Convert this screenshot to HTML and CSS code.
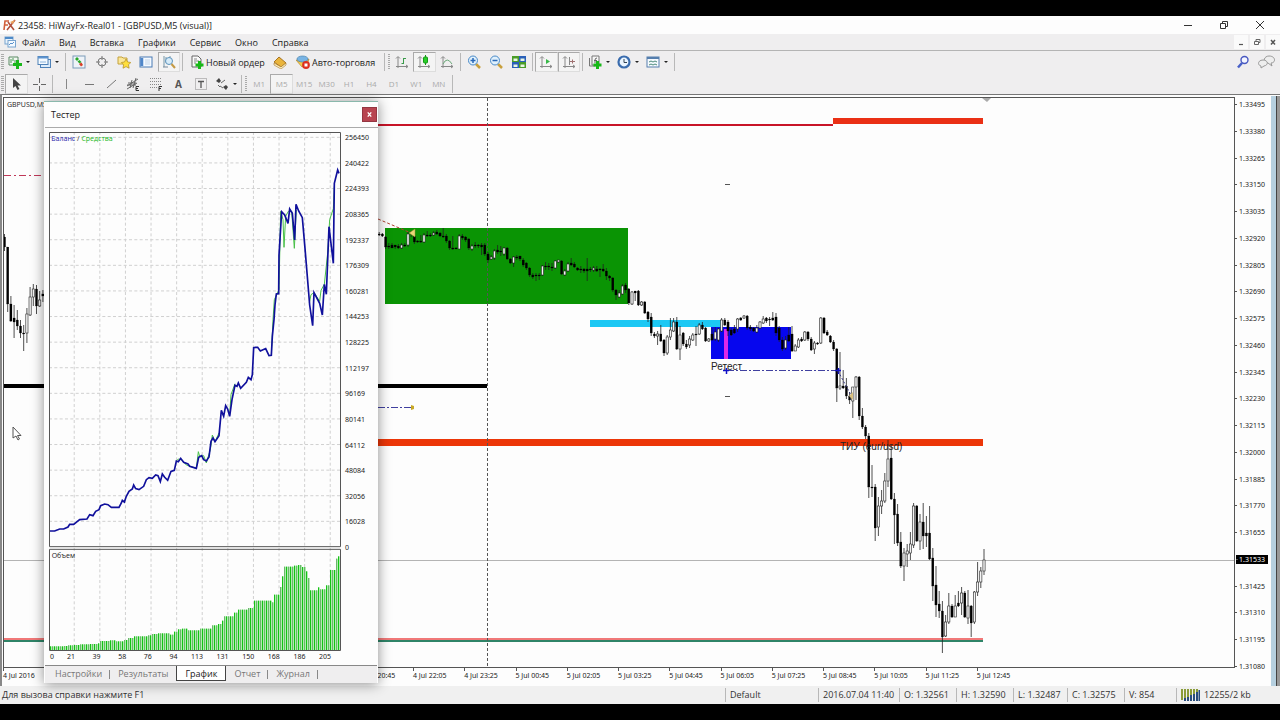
FILE: index.html
```html
<!DOCTYPE html>
<html lang="ru">
<head>
<meta charset="utf-8">
<title>23458: HiWayFx-Real01 - [GBPUSD,M5 (visual)]</title>
<link rel="stylesheet" href="styles.css">
</head>
<body>
<div class="app">
  <header class="titlebar">
    <svg class="logo" width="14" height="12" viewBox="0 0 14 12"><path d="M2 11L3 2h4M2.500 6H6" fill="none" stroke="#d2603c" stroke-width="1.600"/><path d="M6 3l6 8M13 1L5 11" fill="none" stroke="#b2503c" stroke-width="1.600"/><path d="M8 3l5-2-2 4" fill="#e9a05c"/></svg>
    <h1 class="title">23458: HiWayFx-Real01 - [GBPUSD,M5 (visual)]</h1>
    <div class="winbtns">
      <button aria-label="Свернуть"><svg width="10" height="10" viewBox="0 0 10 10"><path d="M1 5.500h8" stroke="#333" fill="none"/></svg></button>
      <button aria-label="Восстановить"><svg width="10" height="10" viewBox="0 0 10 10"><path d="M1.500 3.500h5v5h-5zM3.500 3V1.500h5v5H7" stroke="#333" fill="none"/></svg></button>
      <button aria-label="Закрыть"><svg width="10" height="10" viewBox="0 0 10 10"><path d="M1 1l8 8M9 1L1 9" stroke="#333" fill="none"/></svg></button>
    </div>
  </header>

  <nav class="menubar">
    <svg class="menuicon" width="12" height="12" viewBox="0 0 12 12"><rect x="1" y="1" width="8" height="7" fill="#e8f2fb" stroke="#78a4cf"/><path d="M1 2h8" stroke="#4e8ac8" stroke-width="2"/><rect x="4" y="4.500" width="7.500" height="6.500" fill="#f4faff" stroke="#78a4cf"/><path d="M5 9l2-2 1 1 2-2" fill="none" stroke="#5b92cc"/></svg>
    <button>Файл</button><button>Вид</button><button>Вставка</button><button>Графики</button><button>Сервис</button><button>Окно</button><button>Справка</button>
    <div class="mdibtns">
      <button aria-label="Свернуть график"><svg width="8" height="8" viewBox="0 0 8 8"><path d="M2 6.500h4" stroke="#555" stroke-width="1.200"/></svg></button>
      <button aria-label="Восстановить график"><svg width="8" height="8" viewBox="0 0 8 8"><path d="M1.500 3.500h4v3h-4zM3 3V1.500h4v3H6M3 1.500h4" stroke="#666" fill="none"/></svg></button>
      <button aria-label="Закрыть график"><svg width="8" height="8" viewBox="0 0 8 8"><path d="M2 2l4 4.500M6 2L2 6.500" stroke="#555" stroke-width="1.500"/></svg></button>
    </div>
  </nav>

  <div class="toolbar">
    <span class="grip"></span>
    <button class="split" aria-label="Новый график"><svg class="ic" viewBox="0 0 14 14"><path d="M1 2h9v8H1z" fill="#f1f7f1" stroke="#5a8a64"/><path d="M3 4v4M5 3v3M7 5v3" stroke="#4a9a54"/><path d="M9.500 5v9M5 9.500h9" stroke="#1ab81a" stroke-width="3"/></svg></button>
    <button class="split" aria-label="Профили"><svg class="ic" viewBox="0 0 14 14"><rect x="3.500" y="4.500" width="10" height="8" fill="#dcecfb" stroke="#4f82b8"/><rect x="1" y="1.500" width="10" height="8" fill="#f4faff" stroke="#4f82b8"/><path d="M1 2.500h10" stroke="#5d93ce" stroke-width="2"/><path d="M3 7h6" stroke="#8db4dc"/></svg></button>
    <span class="sep"></span>
    <div class="group g5">
      <button aria-label="Обзор рынка"><svg class="ic" viewBox="0 0 14 14"><rect x="1" y="1" width="12" height="12" fill="#eef3f8" stroke="#7c9cba"/><path d="M3 4l2-2 2 2-2 2zM5.500 6.500l2-1.500 2 2-2 1.500z" fill="#28a828"/><path d="M7 9l2.500-1.500L11 10l-2 1.500z" fill="#d84028"/></svg></button>
      <button aria-label="Окно данных"><svg class="ic" viewBox="0 0 14 14"><circle cx="7" cy="7" r="4" fill="none" stroke="#777"/><path d="M7 1v4M7 9v4M1 7h4M9 7h4" stroke="#777"/></svg></button>
      <button aria-label="Навигатор"><svg class="ic" viewBox="0 0 14 14"><path d="M1 2h4l1 1h4v6H1z" fill="#fbe79a" stroke="#c4a23c"/><path d="M9 4l1.600 3 3.200.5-2.300 2.300.6 3.400L9 11.600l-3 1.600.6-3.400L4.300 7.500 7.500 7z" fill="#ffdf3c" stroke="#b8942c" stroke-width=".8"/></svg></button>
      <button aria-label="Терминал"><svg class="ic" viewBox="0 0 14 14"><rect x="1" y="2" width="12" height="10" fill="#f4f9ff" stroke="#4a7ab4"/><path d="M2 3v8M3.500 3v8" stroke="#4f86c8" stroke-width="1.500"/><path d="M6 5h5M6 7h5M6 9h5" stroke="#c2d4e8"/></svg></button>
      <button class="on" aria-label="Тестер"><svg class="ic" viewBox="0 0 14 14"><path d="M2 1v11M4 2v6M8 1v4" stroke="#7898a8"/><path d="M1 12h5" stroke="#789"/><circle cx="7" cy="6" r="3.500" fill="#d6ebf8" stroke="#5c93bc"/><path d="M9.500 9l3.500 4" stroke="#c49a44" stroke-width="2"/></svg></button>
    </div>
    <span class="sep"></span>
    <button class="text order"><svg class="ic" viewBox="0 0 14 14"><path d="M2 1h6l3 3v8H2z" fill="#fafafa" stroke="#666"/><path d="M4 4h3M4 6h5M4 8h2" stroke="#888"/><path d="M9.500 6v8M5.500 10h8" stroke="#18b818" stroke-width="3"/></svg>Новый ордер</button>
    <button class="book" aria-label="MetaEditor"><svg class="ic" viewBox="0 0 14 14"><path d="M1 7l5-5 7 6-5 4z" fill="#e9b43c" stroke="#a67422"/><path d="M1 8l7 4 5-4v2l-5 4-7-4z" fill="#fff3c4" stroke="#a67422" stroke-width=".6"/></svg></button>
    <button class="text auto"><svg class="ic" viewBox="0 0 14 14"><path d="M0 5q7 3 13-1l-2 6-5 2z" fill="#f4c84c" stroke="#b48a28" stroke-width=".7"/><ellipse cx="6.500" cy="4" rx="5.500" ry="3" fill="#78b4e4" stroke="#4a82ac" stroke-width=".7"/><circle cx="10" cy="10" r="3.900" fill="#dc3020"/><rect x="8.500" y="8.500" width="3" height="3" fill="#fff"/></svg>Авто-торговля</button>
    <span class="sep"></span><span class="grip thin"></span>
    <div class="group g3">
      <button aria-label="Бары"><svg class="ic" viewBox="0 0 14 14"><path d="M3 2v11M1 11.500h12M1 3.500l2-2 2 2M11 10l2 1.500-2 1.500" fill="none" stroke="#888"/><path d="M8.500 3v6M8.500 3.500H11M6.500 8.500h2" stroke="#3a9a4a" fill="none"/></svg></button>
      <button class="on" aria-label="Свечи"><svg class="ic" viewBox="0 0 14 14"><path d="M3 2v11M1 11.500h12M1 3.500l2-2 2 2M11 10l2 1.500-2 1.500" fill="none" stroke="#888"/><path d="M8.500 0v10" stroke="#189818"/><rect x="6.500" y="2" width="4" height="6" rx="1" fill="#28d028" stroke="#189818"/></svg></button>
      <button aria-label="Линия"><svg class="ic" viewBox="0 0 14 14"><path d="M3 2v11M1 11.500h12M1 3.500l2-2 2 2M11 10l2 1.500-2 1.500" fill="none" stroke="#888"/><path d="M3 9q4-8 9 0" fill="none" stroke="#6aa878"/></svg></button>
    </div>
    <span class="sep"></span>
    <div class="group g3">
      <button aria-label="Увеличить"><svg class="ic" viewBox="0 0 14 14"><path d="M9 9l4 4" stroke="#c8a03c" stroke-width="2.500"/><circle cx="6" cy="5.500" r="4.500" fill="#dff0fc" stroke="#4a8ac8"/><path d="M6 3v5M3.500 5.500h5" stroke="#2868b8" stroke-width="1.500"/></svg></button>
      <button aria-label="Уменьшить"><svg class="ic" viewBox="0 0 14 14"><path d="M9 9l4 4" stroke="#c8a03c" stroke-width="2.500"/><circle cx="6" cy="5.500" r="4.500" fill="#dff0fc" stroke="#4a8ac8"/><path d="M3.500 5.500h5" stroke="#2868b8" stroke-width="1.500"/></svg></button>
      <button aria-label="Окна мозаикой"><svg class="ic" viewBox="0 0 14 14"><path d="M0 1h7v6H0zM7 7h7v6H7z" fill="#4a9c28"/><path d="M7 1h7v6H7zM0 7h7v6H0z" fill="#2a60b8"/><path d="M1.500 3.500h4V6h-4zM8.500 3.500h4V6h-4zM1.500 9.500h4V12h-4zM8.500 9.500h4V12h-4z" fill="#eaf6e4"/></svg></button>
    </div>
    <span class="sep"></span>
    <div class="group g2">
      <button class="on" aria-label="Автопрокрутка"><svg class="ic" viewBox="0 0 14 14"><path d="M3 2v11M1 11.500h12M1 3.500l2-2 2 2M11 10l2 1.500-2 1.500" fill="none" stroke="#888"/><path d="M7 4l4 2.500L7 9z" fill="#38b848"/></svg></button>
      <button class="on" aria-label="Сдвиг графика"><svg class="ic" viewBox="0 0 14 14"><path d="M3 2v11M1 11.500h12M1 3.500l2-2 2 2M11 10l2 1.500-2 1.500M7.500 2v8" fill="none" stroke="#888"/><path d="M8 6.500h5M10.500 4.500v4" stroke="#a07070"/></svg></button>
    </div>
    <span class="sep"></span>
    <button class="split" aria-label="Индикаторы"><svg class="ic" viewBox="0 0 14 14"><path d="M4 1h7v9H4z" fill="#f6f6f6" stroke="#777"/><path d="M1.500 3v8h6" fill="none" stroke="#777"/><path d="M9 3q-2 0-2 2v3M6 5.500h3" fill="none" stroke="#666"/><path d="M9.500 6v8M5.500 10h8" stroke="#18b818" stroke-width="3"/></svg></button>
    <button class="split" aria-label="Периоды"><svg class="ic" viewBox="0 0 14 14"><circle cx="7" cy="7" r="5.500" fill="#eaf5ff" stroke="#3a6cae" stroke-width="2.200"/><path d="M7 4v3.500h3" fill="none" stroke="#345"/></svg></button>
    <button class="split" aria-label="Шаблоны"><svg class="ic" viewBox="0 0 14 14"><rect x="1" y="2" width="12" height="10" fill="#f6faff" stroke="#567fae"/><path d="M1 3h12" stroke="#567fae" stroke-width="2"/><path d="M3 7l2-1 2 1 2-1 2 1M3 10l2-1 2 1 2-1 2 1" fill="none" stroke="#4a8a7a"/></svg></button>
    <span class="sep"></span>
    <div class="right">
      <button aria-label="Поиск"><svg class="ic" viewBox="0 0 14 14"><circle cx="8.500" cy="5" r="3.500" fill="#f4f6ff" stroke="#4858c0" stroke-width="1.400"/><path d="M6 8l-4 4.500" stroke="#4860c8" stroke-width="2.500"/></svg></button>
      <button aria-label="Сообщения"><svg width="17" height="14" viewBox="0 0 17 14"><path d="M11 1c7 0 7 7 2 7l1 3-4-3C4 7 6 1 11 1z" fill="#eee" stroke="#999"/><path d="M5 5c5 0 6 5 1 6l-3 2 0-2C-1 10 0 5 5 5z" fill="#eee" stroke="#999"/></svg></button>
    </div>
  </div>

  <div class="toolbar second">
    <span class="grip"></span>
    <div class="group g2">
      <button class="on" aria-label="Курсор"><svg class="ic" viewBox="0 0 14 14"><path d="M4 1v10l2.500-2 2 4 2-1-2-3.500H12z" fill="#444"/></svg></button>
      <button aria-label="Перекрестие"><svg class="ic" viewBox="0 0 14 14"><path d="M7.500 1v5M7.500 9v5M1 7.500h5M9 7.500h5" stroke="#666"/></svg></button>
    </div>
    <span class="sep"></span>
    <div class="group g7">
      <button aria-label="Вертикальная линия"><svg class="ic" viewBox="0 0 14 14"><path d="M7.500 2v10" stroke="#888"/></svg></button>
      <button aria-label="Горизонтальная линия"><svg class="ic" viewBox="0 0 14 14"><path d="M3 7.500h9" stroke="#777"/></svg></button>
      <button aria-label="Трендовая линия"><svg class="ic" viewBox="0 0 14 14"><path d="M3 11L12 3" stroke="#777"/></svg></button>
      <button aria-label="Канал"><svg class="ic" viewBox="0 0 14 14"><path d="M1 9l11-7M1 12l10-6M4 11l2-8M7 11l3-10M2 6h8M1 8h9" stroke="#666" fill="none"/><path d="M13 9.500h-3v4h3M10 11.500h2" stroke="#333" fill="none"/></svg></button>
      <button aria-label="Фибоначчи"><svg class="ic" viewBox="0 0 14 14"><path d="M1 1.500h12M1 4.500h12M1 7.500h12M1 10.500h7" stroke="#888" stroke-dasharray="1 1"/><path d="M13 9.500h-3V14M10 11.500h2" stroke="#333" fill="none"/></svg></button>
      <button class="glyph">A</button>
      <button aria-label="Метка"><svg class="ic" viewBox="0 0 14 14"><rect x="1.500" y="1.500" width="11" height="11" fill="none" stroke="#888" stroke-dasharray="1 1"/><path d="M4 4.500h6M7 4v7" stroke="#555" stroke-width="1.300"/></svg></button>
    </div>
    <button class="split" aria-label="Стрелки"><svg class="ic" viewBox="0 0 14 14"><path d="M1 4l3-3 2 3-2 2zM8 10l3-2 2 2-2 3z" fill="#444"/><path d="M3 8l2 2M6 6l4-3M5 9l3 2" fill="none" stroke="#666"/></svg></button>
    <span class="sep"></span><span class="grip thin"></span>
    <div class="group g9">
      <button>M1</button><button class="on">M5</button><button>M15</button><button>M30</button><button>H1</button><button>H4</button><button>D1</button><button>W1</button><button>MN</button>
    </div>
    <span class="sep"></span>
  </div>

  <main class="workspace">
    <div class="chart">
      <div class="plotbox">
        <svg class="plot" viewBox="4 98 1230 569" preserveAspectRatio="none">
          <path d="M4 560.500H1235" stroke="#b4b4b4"/>
          <path d="M4 175.500H44" stroke="#c03858" stroke-dasharray="7 3 2 3"/>
          <rect x="378" y="124" width="455" height="2" fill="#c81428"/>
          <rect x="833" y="118" width="150" height="6" fill="#ea3015"/>
          <rect x="378" y="439" width="605" height="7" fill="#ec3608"/>
          <rect x="4" y="384" width="483" height="4" fill="#000"/>
          <rect x="4" y="638" width="979" height="2" fill="#f07878"/>
          <rect x="4" y="640" width="979" height="2" fill="#2f8468"/>
          <rect x="385" y="228" width="243" height="76" fill="#0a9404"/>
          <rect x="590" y="320" width="131" height="7" fill="#1cc8f4"/>
          <rect x="711" y="327" width="80" height="32" fill="#0606ee"/>
          <rect x="724" y="329" width="4" height="30" fill="#dc28e8"/>
          <path d="M487.500 98V668" stroke="#555" stroke-dasharray="3 2"/>
          <path d="M378 219l33 14" stroke="#b04030" stroke-dasharray="3 2" fill="none"/>
          <path d="M378 407.500H412M727 370.500H836" stroke="#4040a0" stroke-dasharray="7 2 2 2" fill="none"/>
          <path d="M411 405l3 1v3l-3 1z" fill="#c8a828"/>
          <path d="M725 184.500h5M725 396.500h5" stroke="#555"/>
          <path d="M982 98h9l-4 4z" fill="#aaa"/>
          <g id="candles"></g>
          <path d="M415 229v8l-6-4z" fill="#e8d878" stroke="#a09030" stroke-width=".5"/>
          <path d="M723 370.500h6M726.500 368v6M835 370.500h6M838.500 368v6" stroke="#1010c8" stroke-width="1.500"/>
          <path d="M838 371l14 26" stroke="#303080" stroke-dasharray="2 2" fill="none"/>
          <path d="M853 392v8l-4-4z" fill="#d8c080"/>
          <text x="711" y="370" class="mark">Ретест</text>
          <text x="840" y="450" class="mark">ТИУ (eur/usd)</text>
          <text x="7" y="107" class="symbol">GBPUSD,M5</text>
        </svg>
      </div>
      <div class="prices">
        <span>1.33495</span><span>1.33380</span><span>1.33265</span><span>1.33150</span><span>1.33035</span><span>1.32920</span><span>1.32805</span><span>1.32690</span><span>1.32575</span><span>1.32460</span><span>1.32345</span><span>1.32230</span><span>1.32115</span><span>1.32000</span><span>1.31885</span><span>1.31770</span><span>1.31655</span><span class="now">1.31533</span><span>1.31425</span><span>1.31310</span><span>1.31195</span><span>1.31080</span>
      </div>
      <div class="times">
        <span>4 Jul 2016</span><span class="resume">4 Jul 20:45</span><span>4 Jul 22:05</span><span>4 Jul 23:25</span><span>5 Jul 00:45</span><span>5 Jul 02:05</span><span>5 Jul 03:25</span><span>5 Jul 04:45</span><span>5 Jul 06:05</span><span>5 Jul 07:25</span><span>5 Jul 08:45</span><span>5 Jul 10:05</span><span>5 Jul 11:25</span><span>5 Jul 12:45</span>
      </div>
    </div>
    <div class="edge"></div>

    <section class="tester">
      <div class="testerhead"><h2>Тестер</h2><button class="close" aria-label="Закрыть тестер"><svg width="7" height="7" viewBox="0 0 8 8"><path d="M2 1.500l4 5M6 1.500l-4 5" stroke="#fff" stroke-width="1.500"/></svg></button></div>
      <div class="testerbody">
        <svg class="graph" viewBox="148 -563 876 1557" preserveAspectRatio="none">
          <g id="grid" stroke="#d0d0d0" stroke-width="3" stroke-dasharray="9 7"></g>
          <g id="volume"></g>
          <polyline fill="none" stroke="#48c048" stroke-width="3" points="530,424 536,418 545,420 560,436 590,446 596,396 600,410 612,408 620,430 632,390 638,346 646,366 658,340"/>
          <polyline fill="none" stroke="#48c048" stroke-width="3" points="690,285 694,225 706,192"/>
          <polyline fill="none" stroke="#48c048" stroke-width="3" points="815,107 820,0 824,-60 838,-90 843,-325 850,-300 853,-217 858,-310 866,-325 876,-325 884,-214 890,-330"/>
          <polyline fill="none" stroke="#48c048" stroke-width="3" points="929,-50 934,-75 943,-81 960,-55 964,-88 974,-106 984,-200 990,-300 1001,-333 1004,-400"/>
          <polyline fill="none" stroke="#10109c" stroke-width="5" points="148,634 165,634 180,628 192,628 205,622 210,614 222,614 240,600 262,598 270,585 280,588 288,575 298,570 303,558 315,553 325,555 335,563 358,563 365,550 368,542 374,547 380,530 388,515 398,508 402,496 408,507 418,510 432,500 440,480 448,474 458,476 468,466 475,468 482,486 488,463 495,473 504,482 514,455 524,452 530,424 536,426 543,416 552,428 565,433 570,440 590,446 597,413 606,408 612,420 620,424 628,412 634,365 640,355 646,366 658,348 665,272 672,290 678,258 684,268 690,290 697,240 706,197 712,200 716,190 723,206 740,188 746,173 754,180 758,165 762,84 768,83 774,83 782,94 790,90 798,87 808,108 815,107 818,50 823,0 826,-44 830,-77 837,-78 838,-194 846,-324 855,-314 865,-289 870,-332 878,-319 885,-239 889,-346 897,-326 908,-306 916,-214 930,-44 939,18 943,-81 960,-49 968,-14 974,-106 980,-76 988,-279 1001,-169 1004,-409 1014,-449 1018,-439"/>
          <path d="M149.500 -561.500H1022.500V681H149.500zM149.500 689H1022.500V992.500H149.500z" fill="none" stroke="#555" stroke-width="3"/>
          <text x="155" y="-536" class="legend"><tspan fill="#2222a8">Баланс</tspan> / <tspan fill="#22b822">Средства</tspan></text>
          <text x="156" y="715" class="legend">Объем</text>
        </svg>
        <div class="values">
          <span>256450</span><span>240422</span><span>224393</span><span>208365</span><span>192337</span><span>176309</span><span>160281</span><span>144253</span><span>128225</span><span>112197</span><span>96169</span><span>80141</span><span>64112</span><span>48084</span><span>32056</span><span>16028</span><span>0</span>
        </div>
        <div class="trades">
          <span class="first"><b>0</b><b>21</b></span><span>39</span><span>58</span><span>76</span><span>94</span><span>113</span><span>131</span><span>150</span><span>168</span><span>186</span><span>205</span>
        </div>
      </div>
      <div class="tabs" role="tablist">
        <button role="tab">Настройки</button><button role="tab">Результаты</button><button role="tab" class="active">График</button><button role="tab">Отчет</button><button role="tab">Журнал</button>
      </div>
    </section>
    <svg class="cursor" width="10" height="16" viewBox="0 0 10 16"><path d="M1 1v11l3-2 2 4 1.500-1-2-3.500H9z" fill="#fff" stroke="#555"/></svg>
  </main>

  <footer class="status">
    <span class="help">Для вызова справки нажмите F1</span>
    <span class="profile">Default</span><span class="date">2016.07.04 11:40</span><span class="price">O: 1.32561</span><span class="price">H: 1.32590</span><span class="quote">L: 1.32487</span><span class="price">C: 1.32575</span><span class="vol">V: 854</span>
    <span class="net"><svg width="19" height="12" viewBox="0 0 19 12"><path d="M1 0v11M4 0v11M7 0v9M10 0v7M13 0v5M16 0v4" stroke="#8a9c38" stroke-width="2"/><path d="M4 9v3M7 8v4M10 6v6M13 5v7M16 3v9M18.500 1v11" stroke="#284c7c" stroke-width="2"/></svg>12255/2 kb</span>
  </footer>
</div>
<script src="chart.js"></script>
</body>
</html>
```

FILE: styles.css
```css
* { box-sizing: border-box; }
body { margin: 0; background: #000; color: #222; font-family: "Open Sans", "Noto Sans", sans-serif; font-size: 9px; }
button { margin: 0; padding: 0; border: 0; background: none; color: inherit; font: inherit; display: flex; align-items: center; justify-content: center; }
svg { display: block; flex: none; }
.app { height: 100vh; padding: 16px 0; display: flex; flex-direction: column; }
.titlebar { height: 18px; background: #fdfdfd; display: flex; align-items: center; padding: 0 2px; gap: 2px; flex: none; }
.title { margin: 0; font-size: 9px; font-weight: 400; }
.winbtns { margin-left: auto; display: flex; }
.winbtns button { width: 36px; height: 16px; }
.menubar { height: 17px; background: #efeeef; border-bottom: 1px solid #b4b4b4; display: flex; align-items: center; padding-left: 4px; flex: none; }
.menuicon { margin-right: 6px; }
.menubar > button { margin-right: 14px; }
.mdibtns { margin-left: auto; display: flex; gap: 2px; }
.mdibtns button { width: 14px; height: 14px; background: #fafafa; }

.toolbar { height: 22px; background: #efeeef; display: flex; align-items: center; flex: none; }
.second { height: 21px; font-size: 8px; color: #aaa; }
.toolbar button { height: 20px; }
.grip { width: 3px; height: 16px; margin: 0 1px; background: repeating-linear-gradient(#aaa 0 1px, #efeeef 1px 2px); }
.thin { width: 2px; }
.sep { width: 1px; height: 18px; margin: 0 2px; background: #b8b8b8; }
.ic { width: 14px; height: 14px; }
.group { display: grid; grid-auto-flow: column; grid-auto-columns: 1fr; }
.g2 { width: 45px; }
.g3 { width: 67px; }
.g5 { width: 112px; }
.g7 { width: 157px; }
.g9 { width: 202px; }
.on { background: #f4f4f4; border: 1px solid; border-color: #aaa #ddd #ddd #aaa; }
.split { width: 29px; justify-content: flex-start; padding-left: 3px; gap: 4px; }
.split::after { content: ""; border: 2px solid transparent; border-top-color: #222; border-bottom: 0; }
.second .split { width: 27px; }
.text { gap: 2px; justify-content: flex-start; padding-left: 5px; white-space: nowrap; }
.order { width: 83px; }
.book { width: 24px; }
.auto { width: 90px; padding-left: 4px; }
.glyph { font-size: 10px; font-weight: 700; color: #555; }
.right { margin-left: auto; display: flex; padding-right: 5px; gap: 8px; }

.workspace { position: relative; flex: 1; min-height: 0; display: flex; background: #fdfdfd; border-top: 1px solid #777; border-left: 2px solid #888; padding-top: 2px; }
.chart { flex: 1; display: grid; grid-template-columns: 1fr 36px; grid-template-rows: 1fr 18px; min-width: 0; padding-left: 1px; }
.plotbox { border: 1px solid #555; min-height: 0; min-width: 0; }
.plot { width: 100%; height: 100%; }
.mark { font-family: "Liberation Sans", Arial, sans-serif; font-size: 10px; fill: #222; }
.symbol { font-size: 7px; fill: #222; }
.prices, .times, .values, .trades { font-size: 7px; line-height: 9px; font-family: "Noto Sans", "Open Sans", sans-serif; color: #222; }
.prices { display: flex; flex-direction: column; justify-content: space-between; padding-top: 3px; margin-bottom: -3px; }
.prices span { position: relative; padding-left: 4px; }
.prices span::before { content: ""; position: absolute; left: 0; top: 4px; width: 2px; height: 1px; background: #555; }
.prices .now { background: #000; color: #fff; margin: 0 3px 0 1px; padding-left: 3px; }
.times { display: grid; grid-template-columns: repeat(24, 1fr); padding-right: 2px; padding-top: 3px; white-space: nowrap; }
.times span { position: relative; }
.times .resume { grid-column-start: 8; }
.times span::before { content: ""; position: absolute; left: 0; top: -3px; width: 1px; height: 3px; background: #555; }
.edge { width: 9px; background: #b6d0e0; border-right: 3px solid #999; box-shadow: inset -1px 0 #444; margin-top: -1px; }

.tester { position: absolute; left: 42px; top: 6px; width: 334px; height: 582px; display: flex; flex-direction: column; background: #fdfdfd; border-top: 1px solid #8ab8ac; box-shadow: 0 1px 12px rgba(0, 0, 0, .45); }
.testerhead { height: 26px; display: flex; align-items: center; justify-content: space-between; padding: 0 1px 0 6px; border-bottom: 1px solid #aaa; margin-left: 1px; }
.testerhead h2 { margin: 0; font-size: 9px; font-weight: 400; }
.close { width: 15px; height: 15px; background: #b84450; border: 1px solid #943642; }
.testerbody { flex: 1; min-height: 0; display: grid; grid-template-columns: 292px 1fr; grid-template-rows: 1fr 14px; padding: 4px 0 0 5px; }
.graph { width: 100%; height: 100%; min-height: 0; }
.legend { font-size: 21px; fill: #222; }
.values { display: flex; flex-direction: column; justify-content: space-between; padding: 1px 0 99px 4px; }
.trades { display: grid; grid-template-columns: 26px repeat(10, 1fr); padding: 1px 10px 0 0; text-align: right; }
.trades b { font-weight: 400; }
.first { display: flex; justify-content: space-between; padding-left: 1px; }
.tabs { height: 18px; flex: none; display: flex; margin: 0 1px; padding-left: 2px; background: #efeeef; border-top: 1px solid #888; color: #777; }
.tabs button { height: 15px; padding: 0 8px; position: relative; }
.tabs button:not(.active)::after { content: ""; position: absolute; right: 0; top: 4px; height: 9px; width: 1px; background: #888; }
.tabs button:nth-child(2)::after { display: none; }
.tabs .active { background: #fff; color: #222; border: 1px solid #444; border-top: 0; padding: 0 8px; }
.cursor { position: absolute; left: 10px; top: 331px; }

.status { height: 18px; flex: none; display: flex; align-items: center; background: #f0f0f0; color: #333; font-size: 9px; white-space: nowrap; }
.status span { border-left: 1px solid #b8b8b8; padding-left: 4px; height: 14px; line-height: 14px; }
.status .help { flex: 1; border: 0; padding-left: 2px; }
.profile { width: 93px; }
.date { width: 81px; }
.price { width: 57px; }
.quote { width: 54px; }
.vol { width: 52px; }
.status .net { width: 104px; display: flex; align-items: center; gap: 4px; }
```

FILE: chart.js
```js
const NS = "http://www.w3.org/2000/svg";

function add(parent, tag, attrs) {
  const node = document.createElementNS(NS, tag);
  for (const key in attrs) node.setAttribute(key, attrs[key]);
  parent.appendChild(node);
}

// Each candle: high, body top, body bottom, low; a trailing "w" marks a rising one.
const early = "234 237 247 251,247 247 304 312,296 304 321 322,305 318 322 338,310 320 326 330,320 326 333 338,325 333 334 351,308 314 333 343 w,287 297 315 316 w,284 289 297 306 w,285 289 306 314,291 300 306 307 w,290 294 296 302";
const main = [
  "232 234 235 236,233 234 236 237,236 237 247 249,243 246 247 249,243 245 248 248,245 245 247 249,244 246 248 249,243 245 248 249 w,243 245 246 247,232 234 245 247 w",
  "231 232 234 237,235 236 242 244,240 241 242 243,235 241 242 243,233 235 242 243 w,231 235 236 237,233 235 236 237,231 233 235 236 w,230 232 234 235,232 233 236 237",
  "228 236 237 238,234 236 241 243,240 241 248 250,236 248 249 250,247 248 249 249,234 236 249 249 w,234 236 238 240,236 237 240 242,238 239 248 250,244 246 249 251 w",
  "242 245 246 248,244 245 246 248,243 245 247 255,243 245 254 256,252 254 260 263,255 257 259 260 w,249 251 258 260 w,245 250 252 254,246 251 252 256,247 248 254 256 w",
  "247 248 259 260,258 259 263 264,256 257 263 267 w,255 257 258 260,256 256 259 261,258 260 265 267,262 263 268 270,267 268 275 277,273 275 277 279,273 275 276 281",
  "273 275 276 280,265 266 275 276 w,262 266 267 270,263 266 267 270,263 267 268 271,260 261 268 269 w,260 260 262 263 w,260 261 274 275,269 271 275 276 w,262 264 271 272 w",
  "258 263 265 266,262 264 267 268,267 268 270 271,266 269 270 273,268 269 271 273,258 269 271 281,267 269 270 272,266 268 270 272 w,266 269 271 272,268 269 270 277",
  "264 269 271 272,268 271 276 280,275 276 278 281,277 278 290 292,289 290 295 300,290 293 297 298 w,284 286 294 295 w,283 285 290 293,288 289 303 305,291 292 304 305 w",
  "291 291 293 301,290 291 305 306,301 302 305 306 w,301 302 313 314,311 312 319 322,313 317 333 336,332 334 336 338,331 334 336 345 w,325 334 341 342,339 340 353 356",
  "335 337 353 355 w,318 330 337 340 w,318 322 331 332 w,317 322 349 350,326 335 349 360 w,332 333 344 346,340 344 347 349,336 339 345 348 w,333 335 340 341 w,326 334 335 346",
  "323 325 334 335 w,322 325 329 330,327 328 341 342,338 339 341 342 w,328 334 340 341,327 332 339 341 w,328 329 340 342 w,318 320 331 332 w,318 320 325 326,320 322 331 336",
  "328 330 335 336,325 329 333 334,318 319 329 332 w,317 318 320 321,315 316 318 319 w,315 316 328 330,325 327 329 331,327 328 331 332,325 328 332 333 w,321 322 328 329 w",
  "316 319 323 324 w,317 318 321 323,317 319 320 326,312 318 320 321,313 317 333 336,326 328 340 342,337 340 349 351,336 340 348 350 w,327 335 341 342,326 334 351 352",
  "344 346 351 351 w,338 340 347 348 w,337 339 341 342,331 332 340 341 w,331 332 339 341,337 339 350 351,341 343 349 354 w,342 343 344 345,317 318 343 344 w,317 318 333 334",
  "330 332 335 336,335 336 342 343,340 342 349 351,348 349 388 402,352 386 388 390 w,370 386 388 389,378 386 396 399,392 396 400 404,387 387 401 418 w,376 377 387 400 w",
  "376 377 416 420,408 416 427 429,425 427 436 439,433 436 487 498,465 487 488 497,484 487 528 541,497 506 527 536 w,490 501 506 514 w,473 481 501 503 w,440 459 481 487 w",
  "445 458 499 500,493 499 515 544,504 514 543 546,532 542 566 568,548 553 566 581 w,544 551 554 567 w,532 544 553 560 w,503 506 545 548 w,505 506 541 542,514 522 541 550 w",
  "503 522 536 549,516 533 536 547,506 533 559 560,548 558 586 601,566 585 605 617,591 604 611 618,601 611 637 653,615 622 636 637 w,593 606 622 624 w,604 606 617 618",
  "595 606 617 617 w,591 603 606 607,587 593 603 615 w,591 593 617 618,590 606 618 624 w,605 606 623 637,591 592 622 624 w,562 582 592 596 w,567 571 582 588 w,549 560 571 575 w"
].join(",");

function drawCandles(data, start) {
  const layer = document.getElementById("candles");
  data.split(",").forEach((row, i) => {
    const [high, top, bottom, low, rising] = row.split(" ");
    const x = start + i * 3.2;
    add(layer, "path", { d: `M${x} ${high}V${low}`, stroke: "#222", "stroke-width": 0.8 });
    add(layer, "rect", {
      x: x - 1.1, y: top, width: 2.2, height: Math.max(bottom - top, 1),
      fill: rising ? "#f4f4f4" : "#000", stroke: rising ? "#222" : "#000", "stroke-width": rising ? 0.6 : 0.2
    });
  });
}
drawCandles(early, 4.5);
drawCandles(main, 379.2);

// Tester grid
const grid = document.getElementById("grid");
for (let i = 0; i < 16; i++) {
  const y = -547 + i * 76.8;
  add(grid, "path", { d: `M148 ${y}H1023` });
}
for (let i = 0; i < 11; i++) {
  const x = 223.7 + i * 76.8;
  add(grid, "path", { d: `M${x} -563V994` });
}

// Volume histogram: steps of [x, top]
const steps = [[148,980],[190,979],[205,977],[222,976],[240,974],[270,973],[290,971],[300,964],[330,962],[345,965],[370,961],[385,955],[400,950],[440,947],[455,943],[470,941],[510,945],[520,936],[532,929],[545,927],[560,932],[600,927],[634,917],[655,913],[664,903],[668,890],[700,879],[714,870],[745,865],[762,843],[815,848],[820,825],[836,802],[842,770],[850,741],[878,738],[893,736],[905,742],[915,755],[920,775],[931,812],[950,803],[960,809],[974,797],[990,751],[1008,717],[1014,710],[1019,704]];
const volume = document.getElementById("volume");
for (let x = 151, s = 0; x < 1021; x += 6) {
  while (s + 1 < steps.length && steps[s + 1][0] <= x) s++;
  const top = steps[s][1];
  add(volume, "rect", { x: x, y: top, width: 6, height: 992 - top, fill: "#b0ecb0" });
  add(volume, "rect", { x: x, y: top, width: 3, height: 992 - top, fill: x % 4 === 1 ? "#6cb46c" : "#14c414" });
}
```
